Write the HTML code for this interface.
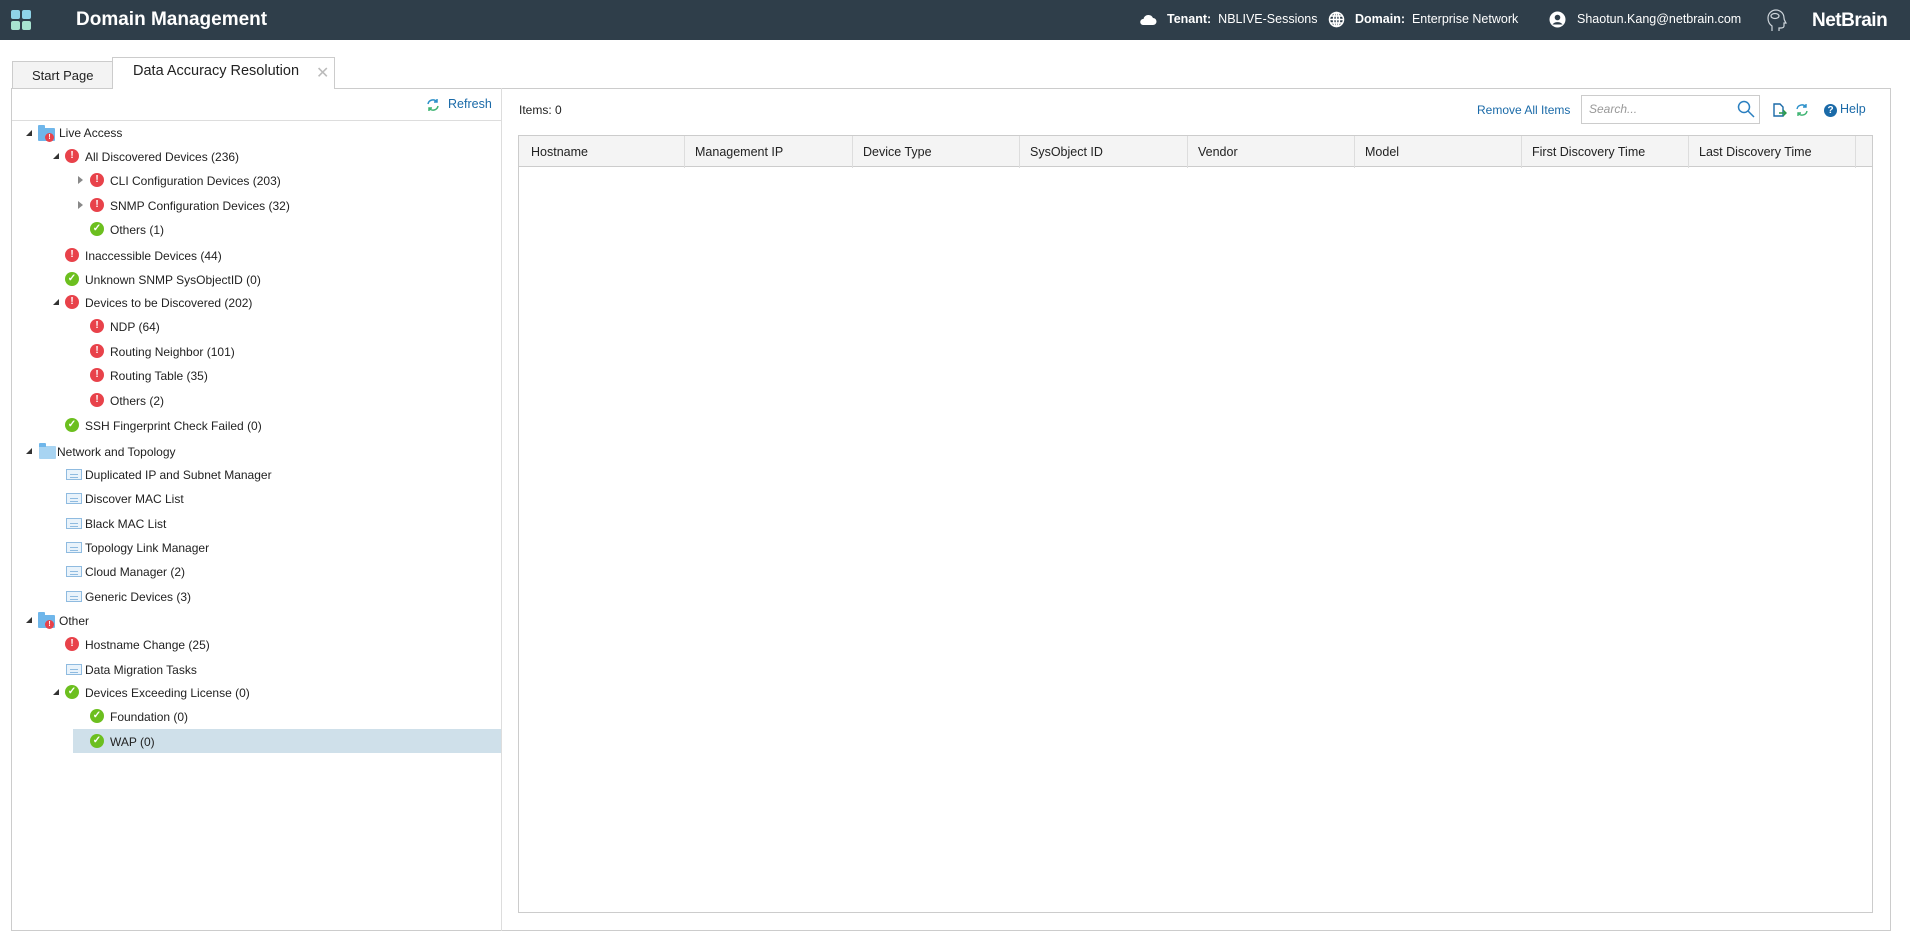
<!DOCTYPE html>
<html><head><meta charset="utf-8"><style>
*{box-sizing:border-box;margin:0;padding:0}
body{width:1910px;height:932px;position:relative;background:#fff;font-family:"Liberation Sans",sans-serif;font-size:12px;color:#222;overflow:hidden}
.a{position:absolute;white-space:nowrap}
.hdr{position:absolute;left:0;top:0;width:1910px;height:40px;background:#2f3e4a;color:#fff}
.ic{position:absolute;width:14px;height:14px;border-radius:50%;color:#fff;font-size:10px;font-weight:bold;text-align:center;line-height:14px}
.r{background:#e8424a}
.g{background:#6cbf1f}
.tri{position:absolute;width:0;height:0;border-left:6px solid transparent;border-bottom:6px solid #333}
.tro{position:absolute;width:0;height:0;border-top:4px solid transparent;border-bottom:4px solid transparent;border-left:5px solid #888}
.tbl{position:absolute;width:16px;height:11px;border:1px solid #8fbbe0;background:#e9f3fb}
.tbl:after{content:"";position:absolute;left:3px;top:4px;width:8px;height:2px;border-top:1px solid #8fbbe0;border-bottom:1px solid #8fbbe0}
.fold{position:absolute;width:17px;height:13px;background:#6fb6ea;border-radius:1px}
.fold:before{content:"";position:absolute;left:0;top:-3px;width:7px;height:4px;background:#6fb6ea;border-radius:1px 1px 0 0}
.th{position:absolute;top:135px;height:32px;line-height:32px;padding-left:10px;border-right:1px solid #ddd;font-size:12.5px}
.lnk{color:#1a6aa8}
.t{top:0}
</style></head><body>
<div class="hdr">
 <div class="a" style="left:11px;top:10px;width:9px;height:9px;background:#8fd3e8;border-radius:2px"></div>
 <div class="a" style="left:22px;top:10px;width:9px;height:9px;background:#8fd3e8;border-radius:2px"></div>
 <div class="a" style="left:11px;top:21px;width:9px;height:9px;background:#a8e3d0;border-radius:2px"></div>
 <div class="a" style="left:22px;top:21px;width:9px;height:9px;background:#a8e3d0;border-radius:2px"></div>
 <div class="a" style="left:76px;top:9px;font-size:19px;font-weight:bold">Domain Management</div>
 <svg class="a" style="left:1139px;top:13px" width="18" height="13" viewBox="0 0 18 13"><path d="M4 12h10a3.5 3.5 0 0 0 0-7 5 5 0 0 0-9.5 1A3 3 0 0 0 4 12z" fill="#fff"/></svg>
 <div class="a" style="left:1167px;top:12px;font-size:12.5px"><b>Tenant:</b>&nbsp;&nbsp;NBLIVE-Sessions</div>
 <svg class="a" style="left:1328px;top:11px" width="17" height="17" viewBox="0 0 17 17" fill="none" stroke="#fff" stroke-width="1.5"><circle cx="8.5" cy="8.5" r="7"/><ellipse cx="8.5" cy="8.5" rx="3" ry="7"/><path d="M1.5 8.5h14M2.5 5h12M2.5 12h12M8.5 1.5v14"/></svg>
 <div class="a" style="left:1355px;top:12px;font-size:12.5px"><b>Domain:</b>&nbsp;&nbsp;Enterprise Network</div>
 <svg class="a" style="left:1549px;top:11px" width="17" height="17" viewBox="0 0 17 17"><circle cx="8.5" cy="8.5" r="8" fill="#fff"/><circle cx="8.5" cy="6.5" r="2.8" fill="#2f3e4a"/><path d="M3.5 13.5a5.5 4 0 0 1 10 0" fill="#2f3e4a"/></svg>
 <div class="a" style="left:1577px;top:12px;font-size:12.5px">Shaotun.Kang@netbrain.com</div>
 <svg class="a" style="left:1766px;top:9px" width="22" height="24" viewBox="0 0 22 24" fill="none" stroke="#cfd6dc" stroke-width="1.2"><path d="M6 22v-5c-3-2-4-5-4-8a8 8 0 0 1 16 0c0 2 1 3 2 5h-2v3c0 1-1 2-3 2h-2v3"/><ellipse cx="9" cy="7" rx="4" ry="2.5"/></svg>
 <div class="a" style="left:1812px;top:10px;font-size:19px;font-weight:bold;letter-spacing:-0.5px">NetBrain</div>
</div>
<div class="a" style="left:12px;top:61px;width:101px;height:28px;background:#f3f3f3;border:1px solid #ccc;border-bottom:none"></div>
<div class="a" style="left:32px;top:68px;font-size:13px">Start Page</div>
<div class="a" style="left:112px;top:57px;width:223px;height:32px;background:#fff;border:1px solid #ccc;border-bottom:none;z-index:2"></div>
<div class="a" style="left:133px;top:63px;font-size:14.5px;z-index:3">Data Accuracy Resolution</div>
<div class="a" style="left:316px;top:63px;font-size:16px;color:#bbb;z-index:3">✕</div>
<div class="a" style="left:11px;top:88px;width:1880px;height:843px;border:1px solid #ccc"></div>
<div class="a" style="left:501px;top:88px;width:1px;height:843px;background:#ddd"></div>
<div class="a" style="left:12px;top:120px;width:489px;height:1px;background:#ddd"></div>
<svg class="a" style="left:426px;top:98px" width="14" height="14" viewBox="0 0 14 14" fill="none" stroke-width="1.5"><path d="M2 6a5 5 0 0 1 9-2" stroke="#2a8fc9"/><path d="M12 8a5 5 0 0 1-9 2" stroke="#3cb371"/><path d="M11 1v3h-3" stroke="#2a8fc9"/><path d="M3 13v-3h3" stroke="#3cb371"/></svg>
<div class="a lnk" style="left:448px;top:97px;font-size:12.5px">Refresh</div>
<div class="a" style="left:73px;top:729px;width:428px;height:24px;background:#cfe0ea"></div>

<div class="tri" style="left:26px;top:130px"></div><div class="fold" style="left:38px;top:128px"></div><div class="ic r" style="left:45px;top:133px;width:9px;height:9px;font-size:7px;line-height:9px">!</div><div class="a" style="left:59px;top:126px">Live Access</div>
<div class="tri" style="left:53px;top:153px"></div><div class="ic r" style="left:65px;top:149px">!</div><div class="a" style="left:85px;top:150px">All Discovered Devices (236)</div>
<div class="tro" style="left:78px;top:176px"></div><div class="ic r" style="left:90px;top:173px">!</div><div class="a" style="left:110px;top:174px">CLI Configuration Devices (203)</div>
<div class="tro" style="left:78px;top:201px"></div><div class="ic r" style="left:90px;top:198px">!</div><div class="a" style="left:110px;top:199px">SNMP Configuration Devices (32)</div>
<div class="ic g" style="left:90px;top:222px">✓</div><div class="a" style="left:110px;top:223px">Others (1)</div>
<div class="ic r" style="left:65px;top:248px">!</div><div class="a" style="left:85px;top:249px">Inaccessible Devices (44)</div>
<div class="ic g" style="left:65px;top:272px">✓</div><div class="a" style="left:85px;top:273px">Unknown SNMP SysObjectID (0)</div>
<div class="tri" style="left:53px;top:299px"></div><div class="ic r" style="left:65px;top:295px">!</div><div class="a" style="left:85px;top:296px">Devices to be Discovered (202)</div>
<div class="ic r" style="left:90px;top:319px">!</div><div class="a" style="left:110px;top:320px">NDP (64)</div>
<div class="ic r" style="left:90px;top:344px">!</div><div class="a" style="left:110px;top:345px">Routing Neighbor (101)</div>
<div class="ic r" style="left:90px;top:368px">!</div><div class="a" style="left:110px;top:369px">Routing Table (35)</div>
<div class="ic r" style="left:90px;top:393px">!</div><div class="a" style="left:110px;top:394px">Others (2)</div>
<div class="ic g" style="left:65px;top:418px">✓</div><div class="a" style="left:85px;top:419px">SSH Fingerprint Check Failed (0)</div>
<div class="tri" style="left:26px;top:448px"></div><div class="fold" style="left:39px;top:446px;background:#a8d4f2"></div><div class="a" style="left:57px;top:445px">Network and Topology</div>
<div class="tbl" style="left:66px;top:469px"></div><div class="a" style="left:85px;top:468px">Duplicated IP and Subnet Manager</div>
<div class="tbl" style="left:66px;top:493px"></div><div class="a" style="left:85px;top:492px">Discover MAC List</div>
<div class="tbl" style="left:66px;top:518px"></div><div class="a" style="left:85px;top:517px">Black MAC List</div>
<div class="tbl" style="left:66px;top:542px"></div><div class="a" style="left:85px;top:541px">Topology Link Manager</div>
<div class="tbl" style="left:66px;top:566px"></div><div class="a" style="left:85px;top:565px">Cloud Manager (2)</div>
<div class="tbl" style="left:66px;top:591px"></div><div class="a" style="left:85px;top:590px">Generic Devices (3)</div>
<div class="tri" style="left:26px;top:617px"></div><div class="fold" style="left:38px;top:615px"></div><div class="ic r" style="left:45px;top:620px;width:9px;height:9px;font-size:7px;line-height:9px">!</div><div class="a" style="left:59px;top:614px">Other</div>
<div class="ic r" style="left:65px;top:637px">!</div><div class="a" style="left:85px;top:638px">Hostname Change (25)</div>
<div class="tbl" style="left:66px;top:664px"></div><div class="a" style="left:85px;top:663px">Data Migration Tasks</div>
<div class="tri" style="left:53px;top:689px"></div><div class="ic g" style="left:65px;top:685px">✓</div><div class="a" style="left:85px;top:686px">Devices Exceeding License (0)</div>
<div class="ic g" style="left:90px;top:709px">✓</div><div class="a" style="left:110px;top:710px">Foundation (0)</div>
<div class="ic g" style="left:90px;top:734px">✓</div><div class="a" style="left:110px;top:735px">WAP (0)</div>
<div class="a" style="left:519px;top:103px;font-size:12px">Items: 0</div>
<div class="a lnk" style="left:1477px;top:103px;font-size:12px">Remove All Items</div>
<div class="a" style="left:1581px;top:95px;width:179px;height:29px;border:1px solid #ccc"></div>
<div class="a" style="left:1589px;top:102px;font-size:12px;font-style:italic;color:#999">Search...</div>
<svg class="a" style="left:1737px;top:100px" width="18" height="18" viewBox="0 0 18 18" fill="none" stroke="#2a7fc0" stroke-width="1.5"><circle cx="7" cy="7" r="5.5"/><path d="M11 11l6 6"/></svg>
<svg class="a" style="left:1773px;top:103px" width="14" height="15" viewBox="0 0 14 15" fill="none" stroke-width="1.4"><path d="M1 1h6l3 3v9H1z" stroke="#1a6aa8"/><path d="M6 10h7M10 7l3 3-3 3" stroke="#2a9a4a"/></svg>
<svg class="a" style="left:1795px;top:103px" width="14" height="14" viewBox="0 0 14 14" fill="none" stroke-width="1.4"><path d="M2 6a5 5 0 0 1 9-2" stroke="#2a8fc9"/><path d="M12 8a5 5 0 0 1-9 2" stroke="#3cb371"/><path d="M11 1v3h-3" stroke="#2a8fc9"/><path d="M3 13v-3h3" stroke="#3cb371"/></svg>
<div class="a" style="left:1824px;top:104px;width:13px;height:13px;border-radius:50%;background:#1a6aa8;color:#fff;font-size:10px;font-weight:bold;text-align:center;line-height:13px">?</div>
<div class="a lnk" style="left:1840px;top:102px;font-size:12.5px">Help</div>
<div class="a" style="left:518px;top:135px;width:1355px;height:778px;border:1px solid #ccc"></div>
<div class="a" style="left:519px;top:136px;width:1353px;height:31px;background:#f4f4f4;border-bottom:1px solid #ccc"></div>
<div class="th" style="left:519px;top:136px;width:166px;padding-left:12px">Hostname</div>
<div class="th" style="left:685px;top:136px;width:168px">Management IP</div>
<div class="th" style="left:853px;top:136px;width:167px">Device Type</div>
<div class="th" style="left:1020px;top:136px;width:168px">SysObject ID</div>
<div class="th" style="left:1188px;top:136px;width:167px">Vendor</div>
<div class="th" style="left:1355px;top:136px;width:167px">Model</div>
<div class="th" style="left:1522px;top:136px;width:167px">First Discovery Time</div>
<div class="th" style="left:1689px;top:136px;width:167px">Last Discovery Time</div>
</body></html>
